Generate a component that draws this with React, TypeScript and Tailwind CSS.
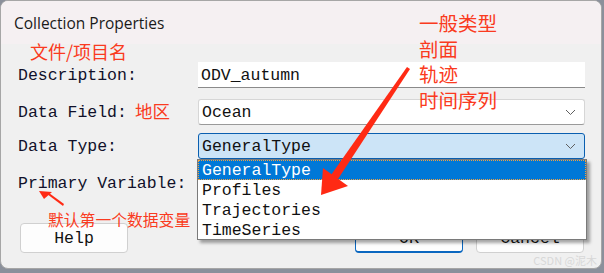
import React from 'react'

const mono = { fontFamily: '"Liberation Mono", "DejaVu Sans Mono", monospace' }
const cjk = { fontFamily: '"Noto Sans CJK SC", "Noto Sans", sans-serif' }

function Chevron() {
  return (
    <svg width="11" height="7" viewBox="0 0 11 7" className="shrink-0">
      <path d="M1 1 L5.5 5.5 L10 1" fill="none" stroke="#5f5f5f" strokeWidth="1" />
    </svg>
  )
}

function Row({ label, children, className = '' }: { label: string; children: React.ReactNode; className?: string }) {
  return (
    <div className={`flex items-center h-[26px] ${className}`}>
      <div className="w-[180px] shrink-0 pt-[3px] text-[16.5px] text-[#10102a] leading-none" style={mono}>
        {label}
      </div>
      {children}
    </div>
  )
}

export default function App() {
  return (
    <div className="w-[604px] h-[273px] bg-[#8b909b] relative overflow-hidden">
      <div className="relative w-[602px] h-[269px] rounded-[8px] border border-[#a6a6a6] bg-[#f0f0f0] overflow-hidden flex flex-col">
        {/* Title bar */}
        <div
          className="h-[43px] shrink-0 bg-[#f5f0f2] flex items-center pl-[13px] pt-[2px] text-[15.5px] text-[#1a1a1a]"
          style={{ fontFamily: '"Open Sans", "Noto Sans", sans-serif' }}
        >
          Collection Properties
        </div>

        {/* Form */}
        <div className="flex flex-col pl-[17px] pr-[16px]">
          <Row label="Description:" className="mt-[18px]">
            <div className="flex-1 h-[26px] bg-white border-b border-[#8a8a8a] flex items-center pl-[3px] pt-[3px] text-[16.5px] text-[#111]" style={mono}>
              ODV_autumn
            </div>
          </Row>
          <Row label="Data Field:" className="mt-[11px]">
            <div className="flex-1 h-[26px] bg-white border border-[#d6d6d6] border-b-[#9a9a9a] rounded-[3px] flex items-center pl-[3px] pr-[8px] text-[16.5px] text-[#111]" style={mono}>
              <span className="flex-1 pt-[3px]">Ocean</span>
              <Chevron />
            </div>
          </Row>
          <Row label="Data Type:" className="mt-[8px]">
            <div className="flex-1 h-[26px] bg-[#cce4f7] border border-[#0a5fb0] rounded-[3px] flex items-center pl-[3px] pr-[8px] text-[16.5px] text-[#111]" style={mono}>
              <span className="flex-1 pt-[3px]">GeneralType</span>
              <Chevron />
            </div>
          </Row>
          <Row label="Primary Variable:" className="mt-[11px]">
            <div className="flex-1 h-[26px] bg-white border border-[#d6d6d6] rounded-[3px]" />
          </Row>

          {/* Buttons */}
          <div className="flex items-center mt-[27px] text-[16.5px] text-[#111]" style={mono}>
            <button className="ml-[2px] w-[108px] h-[30px] pt-[3px] bg-[#fdfdfd] border border-[#d0d0d0] rounded-[4px]">Help</button>
            <button className="ml-auto w-[108px] h-[30px] pt-[3px] bg-[#fdfdfd] border border-[#0a67c0] border-b-2 rounded-[4px]">OK</button>
            <button className="ml-[13px] mr-[1px] w-[108px] h-[30px] pt-[3px] bg-[#fdfdfd] border border-[#d0d0d0] rounded-[4px]">Cancel</button>
          </div>
        </div>

        {/* Open dropdown list */}
        <div
          className="absolute left-[196px] top-[158px] w-[390px] h-[81px] bg-white border border-[#7a7a7a] shadow-[3px_3px_3px_rgba(0,0,0,0.35)] flex flex-col text-[16.5px] text-[#111]"
          style={mono}
        >
          <div className="h-[20px] bg-[#0078d7] text-white border border-dotted border-[#f0a040] flex items-center pl-[3px] pt-[3px] shrink-0">GeneralType</div>
          <div className="h-[20px] flex items-center pl-[4px] pt-[3px] shrink-0">Profiles</div>
          <div className="h-[20px] flex items-center pl-[4px] pt-[3px] shrink-0">Trajectories</div>
          <div className="h-[20px] flex items-center pl-[4px] pt-[3px] shrink-0">TimeSeries</div>
        </div>

        {/* Annotations */}
        <div className="absolute left-[29px] top-[41px] text-[18px] leading-none text-[#fa3a20]" style={cjk}>文件/项目名</div>
        <div className="absolute left-[134px] top-[101px] text-[17.5px] leading-none text-[#fa3a20]" style={cjk}>地区</div>
        <div className="absolute left-[418px] top-[12px] flex flex-col gap-[6px] text-[19.5px] leading-none text-[#fa3a20]" style={cjk}>
          <span>一般类型</span>
          <span>剖面</span>
          <span>轨迹</span>
          <span>时间序列</span>
        </div>
        <div className="absolute left-[47px] top-[211px] text-[15.8px] leading-none text-[#fa3a20]" style={cjk}>默认第一个数据变量</div>

        <svg className="absolute left-0 top-0 pointer-events-none" width="602" height="269" viewBox="0 0 602 269">
          <polygon points="406,66 409,68 337,178 330,174" fill="#ff2a14" />
          <polygon points="320,194 322,167 347,185" fill="#ff2a14" />
          <polygon points="38,190 51,191 43,198" fill="#ff2a14" />
          <polygon points="46,193 48,192 63,203 62,205" fill="#ff2a14" />
        </svg>

        <div
          className="absolute right-[4px] bottom-[2px] text-[11px] leading-none text-[#d8d8d8]"
          style={{ fontFamily: '"Noto Sans CJK SC", "Noto Sans", sans-serif' }}
        >
          CSDN @泥木
        </div>
      </div>
    </div>
  )
}
